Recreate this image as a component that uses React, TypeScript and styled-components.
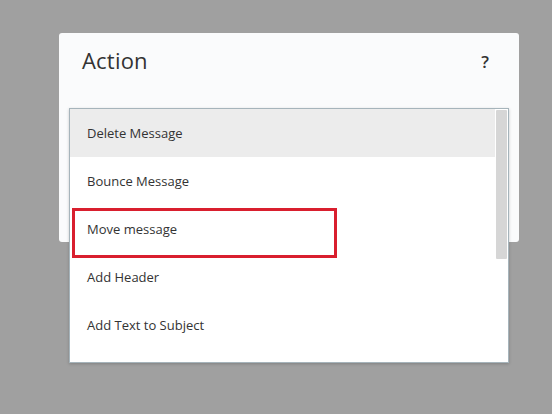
import React from "react";
import styled, { createGlobalStyle } from "styled-components";

const Global = createGlobalStyle`
  html, body { margin: 0; padding: 0; background: #a0a0a0; }
  body { font-family: "Open Sans", "Noto Sans", sans-serif; }
`;

const Page = styled.div`
  width: 552px; height: 414px; position: relative; overflow: hidden; background: #a0a0a0;
`;

const Dialog = styled.div`
  position: absolute; left: 59px; top: 33px; width: 460px; height: 209px;
  background: #fafbfc; border-radius: 3px;
  display: flex; justify-content: space-between; align-items: flex-start;
  padding: 12px 30px 0 23px; box-sizing: border-box;
`;

const Title = styled.div`
  font-size: 22px; color: #333; font-weight: 400; letter-spacing: 0.2px;
`;

const Help = styled.div`
  font-size: 17px; font-weight: 600; color: #333; padding-top: 5px;
`;

const List = styled.div`
  position: absolute; left: 69px; top: 108px; width: 440px; height: 255px;
  box-sizing: border-box; border: 1px solid #a6b4bb; background: #fff;
  display: flex; box-shadow: 0 1px 3px rgba(0,0,0,0.2);
`;

const Items = styled.div`flex: 1; display: flex; flex-direction: column;`;

const Item = styled.div<{ $active?: boolean }>`
  height: 48px; flex: none; display: flex; align-items: center; padding-left: 17px;
  font-size: 13px; color: #333; background: ${p => (p.$active ? "#ececec" : "#fff")};
`;

const Track = styled.div`width: 13px; background: #fff; padding: 1px 1px 0 1px; box-sizing: border-box;`;
const Thumb = styled.div`height: 149px; background: #d6d6d6; border-radius: 1px;`;

const Highlight = styled.div`
  position: absolute; left: 72px; top: 208px; width: 265px; height: 50px;
  box-sizing: border-box; border: 3px solid #d91f2e;
`;

export default function App() {
  const items = ["Delete Message", "Bounce Message", "Move message", "Add Header", "Add Text to Subject"];
  return (
    <Page>
      <Global />
      <Dialog>
        <Title>Action</Title>
        <Help>?</Help>
      </Dialog>
      <List>
        <Items>
          {items.map((t, i) => (
            <Item key={t} $active={i === 0}>{t}</Item>
          ))}
        </Items>
        <Track><Thumb /></Track>
      </List>
      <Highlight />
    </Page>
  );
}
